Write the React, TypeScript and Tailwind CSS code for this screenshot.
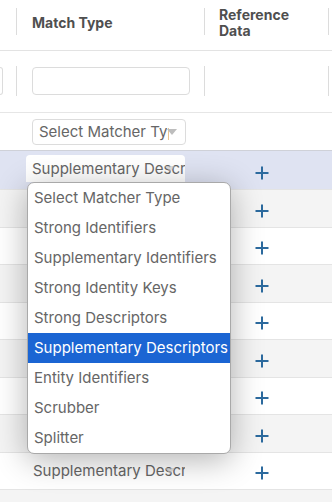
import React from 'react'

const options = [
  'Select Matcher Type',
  'Strong Identifiers',
  'Supplementary Identifiers',
  'Strong Identity Keys',
  'Strong Descriptors',
  'Supplementary Descriptors',
  'Entity Identifiers',
  'Scrubber',
  'Splitter',
]

const Plus = () => (
  <svg width="14" height="14" viewBox="0 0 14 14" className="text-[#2c6a9e]">
    <path d="M7 0.5v13M0.5 7h13" stroke="currentColor" strokeWidth="2" fill="none" />
  </svg>
)

const Caret = ({ faint = false }: { faint?: boolean }) => (
  <span
    className={`absolute top-1/2 -translate-y-1/2 w-0 h-0 border-x-[5px] border-x-transparent border-t-[6px] ${
      faint ? 'right-[10px] border-t-[#c8c8c8] opacity-60' : 'right-[8px] border-t-[#bdbdbd]'}`}
  />
)

const rows = [
  { bg: 'bg-[#f4f4f4]', text: '' },
  { bg: 'bg-white', text: '' },
  { bg: 'bg-[#f4f4f4]', text: '' },
  { bg: 'bg-white', text: '' },
  { bg: 'bg-[#f4f4f4]', text: '' },
  { bg: 'bg-white', text: '' },
  { bg: 'bg-[#f4f4f4]', text: '' },
  { bg: 'bg-white', text: 'Supplementary Descr' },
  { bg: 'bg-[#f4f4f4]', text: 'box' },
]

const Sep = ({ h = 'h-[27px]' }: { h?: string }) => <div className={`w-px ${h} bg-[#dcdcdc] shrink-0`} />

export default function App() {
  return (
    <div className="relative w-[332px] h-[502px] overflow-hidden bg-white text-[#666] font-['Inter',sans-serif]">
      {/* Header */}
      <div className="flex items-start h-[51px] pt-[8px] border-b border-[#e3e3e3]">
        <div className="w-[16px] shrink-0" />
        <Sep />
        <div className="w-[187px] pl-[15px] pt-[7px] text-[14px] leading-[16px] font-bold text-[#4f4f4f]">Match Type</div>
        <Sep />
        <div className="w-[123px] pl-[14px] -mt-[1px] text-[14px] leading-[16px] font-bold text-[#4f4f4f]">Reference<br />Data</div>
        <Sep />
      </div>

      {/* Filter row */}
      <div className="flex items-start h-[62px] pt-[15px] border-b border-[#e6e6e6]">
        <div className="w-[16px] shrink-0">
          <div className="w-[3px] h-[28px] mt-px border border-l-0 border-[#dcdcdc] rounded-r-[3px]" />
        </div>
        <Sep h="h-[30px]" />
        <div className="w-[187px] pl-[15px]">
          <div className="w-[158px] h-[28px] mt-px border border-[#dcdcdc] rounded-[4px] bg-white" />
        </div>
        <Sep h="h-[30px]" />
        <div className="w-[123px]" />
        <Sep h="h-[30px]" />
      </div>

      {/* New row */}
      <div className="flex items-center h-[38px] border-b border-[#cfd1d8]">
        <div className="w-[32px] shrink-0" />
        <div className="relative w-[154px] h-[26px] border border-[#dcdcdc] rounded-[4px] bg-white overflow-hidden">
          <div className="w-[136px] pl-[6px] text-[15px] leading-[24px] whitespace-nowrap overflow-hidden">Select Matcher Type</div>
          <Caret />
        </div>
      </div>

      {/* Selected row */}
      <div className="flex items-center h-[38px] bg-[#dfe3f2]">
        <div className="w-[26px] shrink-0" />
        <div className="relative w-[159px] h-[27px] -mt-[3px] rounded-t-[4px] bg-white overflow-hidden">
          <div className="pl-[6px] text-[15px] leading-[27px] whitespace-nowrap overflow-hidden">Supplementary Descriptors</div>
          <Caret faint />
        </div>
        <div className="ml-[70px] pt-[5px]"><Plus /></div>
      </div>

      {rows.map((r, i) => (
        <div key={i} className={`flex items-center h-[37.5px] border-t border-[#e4e4e4] ${r.bg}`}>
          <div className="w-[26px] shrink-0" />
          <div className="relative w-[159px] h-[27px] overflow-hidden">
            {r.text === 'box' ? (
              <div className="w-[159px] h-[30px] mt-[8px] rounded-t-[4px] bg-[#fafafa]" />
            ) : r.text ? (
              <>
                <div className="pl-[7px] text-[15px] leading-[27px] whitespace-nowrap overflow-hidden">Supplementary Descriptors</div>
                <Caret faint />
              </>
            ) : null}
          </div>
          {r.text !== 'box' && <div className="ml-[70px] pt-[5px]"><Plus /></div>}
        </div>
      ))}

      {/* Dropdown */}
      <div className="absolute left-[27px] top-[182px] w-[204px] py-0 bg-white border border-[#a9a9a9] rounded-[7px] overflow-hidden shadow-[0_6px_32px_rgba(0,0,0,0.3)]">
        {options.map(o => (
          <div key={o}
            className={`h-[30px] px-[6px] text-[15px] leading-[30px] whitespace-nowrap ${
              o === 'Supplementary Descriptors' ? 'bg-[#1b65d3] text-white' : 'text-[#666]'}`}>
            {o}
          </div>
        ))}
      </div>
    </div>
  )
}
